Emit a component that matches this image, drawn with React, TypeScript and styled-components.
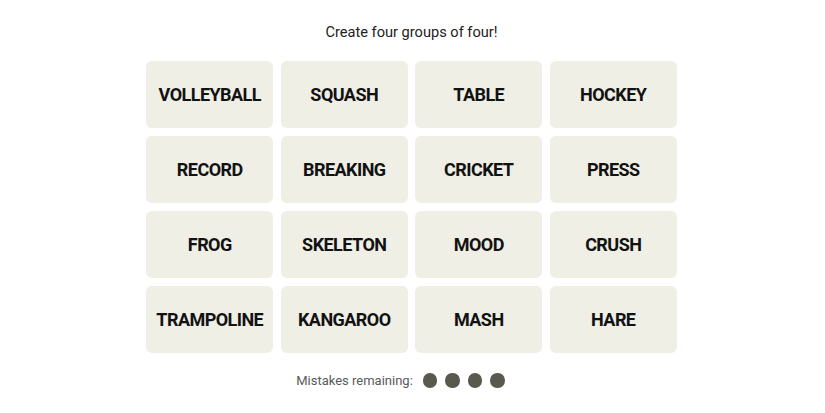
import React from 'react';
import styled, { createGlobalStyle } from 'styled-components';

const GlobalStyle = createGlobalStyle`
  body {
    margin: 0;
    background: #ffffff;
    font-family: 'Liberation Sans', Arial, sans-serif;
  }
`;

const Page = styled.div`
  width: 825px;
  height: 413px;
  display: flex;
  flex-direction: column;
  align-items: center;
  padding-top: 23px;
  box-sizing: border-box;
`;

const Prompt = styled.p`
  margin: 0 2px 19px 0;
  font-family: 'Roboto', 'Liberation Sans', sans-serif;
  font-size: 14.6px;
  font-weight: 400;
  color: #222;
  line-height: 19px;
`;

const Board = styled.div`
  display: grid;
  grid-template-columns: repeat(4, 127px);
  grid-auto-rows: 67px;
  column-gap: 7.5px;
  row-gap: 8px;
  margin-right: 2px;
`;

const Tile = styled.div`
  display: flex;
  align-items: center;
  justify-content: center;
  padding-bottom: 1px;
  background: #efefe6;
  border-radius: 6px;
  font-family: 'Roboto', 'Liberation Sans', sans-serif;
  font-weight: 700;
  font-size: 18px;
  color: #121212;
  text-transform: uppercase;
  letter-spacing: -0.55px;
`;

const Mistakes = styled.div`
  display: flex;
  align-items: center;
  margin-top: 20px;
  margin-right: 24px;
  gap: 10px;
  font-family: 'Roboto', 'Liberation Sans', sans-serif;
  font-size: 13px;
  color: #5a5a5a;
`;

const Dots = styled.div`
  display: flex;
  gap: 8px;
`;

const Dot = styled.span`
  width: 14.5px;
  height: 14.5px;
  border-radius: 50%;
  background: #5a594e;
`;

const words = [
  'Volleyball', 'Squash', 'Table', 'Hockey',
  'Record', 'Breaking', 'Cricket', 'Press',
  'Frog', 'Skeleton', 'Mood', 'Crush',
  'Trampoline', 'Kangaroo', 'Mash', 'Hare',
];

const App: React.FC = () => (
  <>
    <GlobalStyle />
    <Page>
      <Prompt>Create four groups of four!</Prompt>
      <Board>
        {words.map((w) => (
          <Tile key={w}>{w}</Tile>
        ))}
      </Board>
      <Mistakes>
        Mistakes remaining:
        <Dots>
          {[0, 1, 2, 3].map((i) => (
            <Dot key={i} />
          ))}
        </Dots>
      </Mistakes>
    </Page>
  </>
);

export default App;
